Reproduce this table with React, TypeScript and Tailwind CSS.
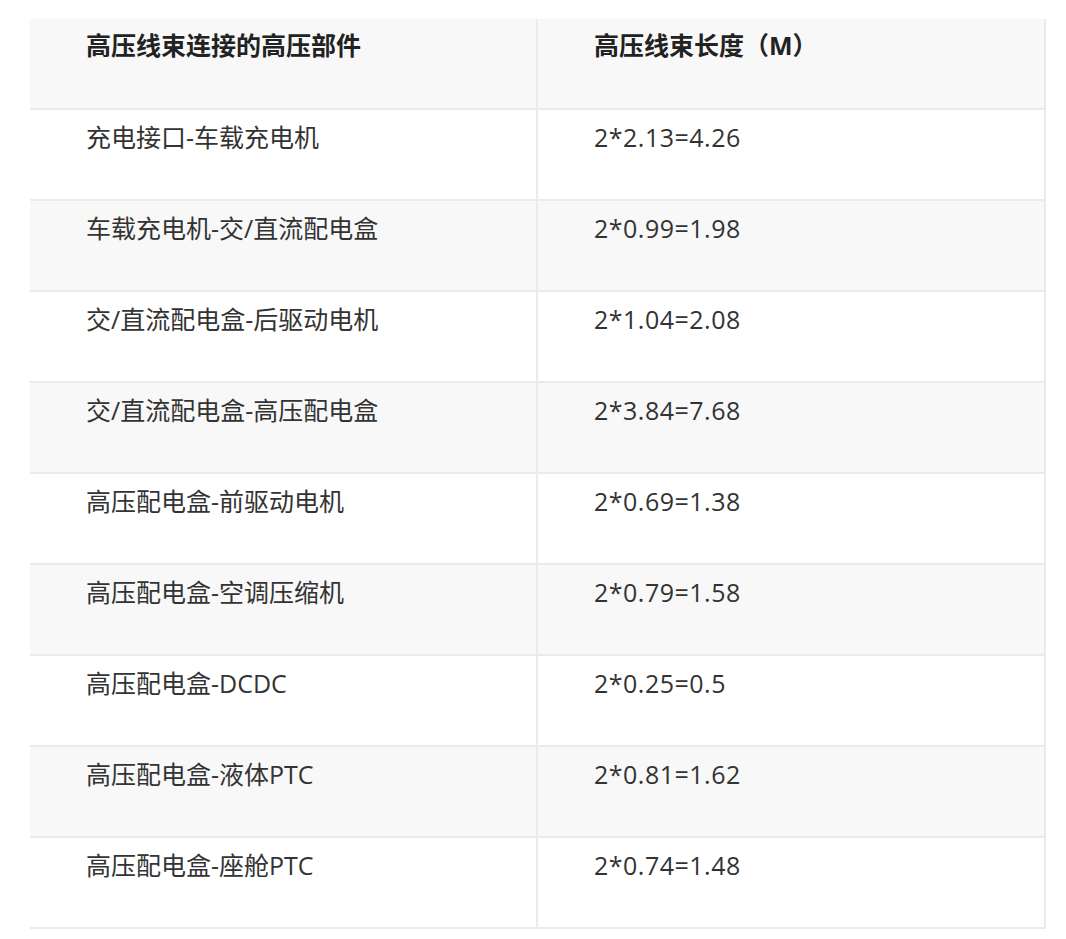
const rows: [string, string][] = [
  ['充电接口-车载充电机', '2*2.13=4.26'],
  ['车载充电机-交/直流配电盒', '2*0.99=1.98'],
  ['交/直流配电盒-后驱动电机', '2*1.04=2.08'],
  ['交/直流配电盒-高压配电盒', '2*3.84=7.68'],
  ['高压配电盒-前驱动电机', '2*0.69=1.38'],
  ['高压配电盒-空调压缩机', '2*0.79=1.58'],
  ['高压配电盒-DCDC', '2*0.25=0.5'],
  ['高压配电盒-液体PTC', '2*0.81=1.62'],
  ['高压配电盒-座舱PTC', '2*0.74=1.48'],
];

const App = () => {
  return (
    <div className="min-h-screen bg-white pt-[19px] pl-[30px] font-['Open_Sans','Noto_Sans_CJK_SC',sans-serif] text-[25px] leading-[36px] text-[#333]">
      <div className="w-[1016px] border-r-2 border-[#ebebeb]">
        {/* header */}
        <div className="flex h-[91px] border-b-2 border-[#ebebeb] bg-[#f8f8f8] font-bold text-[#222]">
          <div className="w-[508px] border-r-2 border-[#ebebeb] pl-[56px] pt-[8px]">高压线束连接的高压部件</div>
          <div className="flex-1 pl-[56px] pt-[8px]">高压线束长度（M）</div>
        </div>
        {rows.map(([part, len], i) => (
          <div
            key={part}
            className={`flex h-[91px] border-b-2 border-[#ebebeb] ${i % 2 === 1 ? 'bg-[#f8f8f8]' : 'bg-white'}`}
          >
            <div className="w-[508px] border-r-2 border-[#ebebeb] pl-[56px] pt-[9px]">{part}</div>
            <div className="flex-1 pl-[56px] pt-[9px] tracking-[0.5px]">{len}</div>
          </div>
        ))}
      </div>
    </div>
  );
};

export default App;
